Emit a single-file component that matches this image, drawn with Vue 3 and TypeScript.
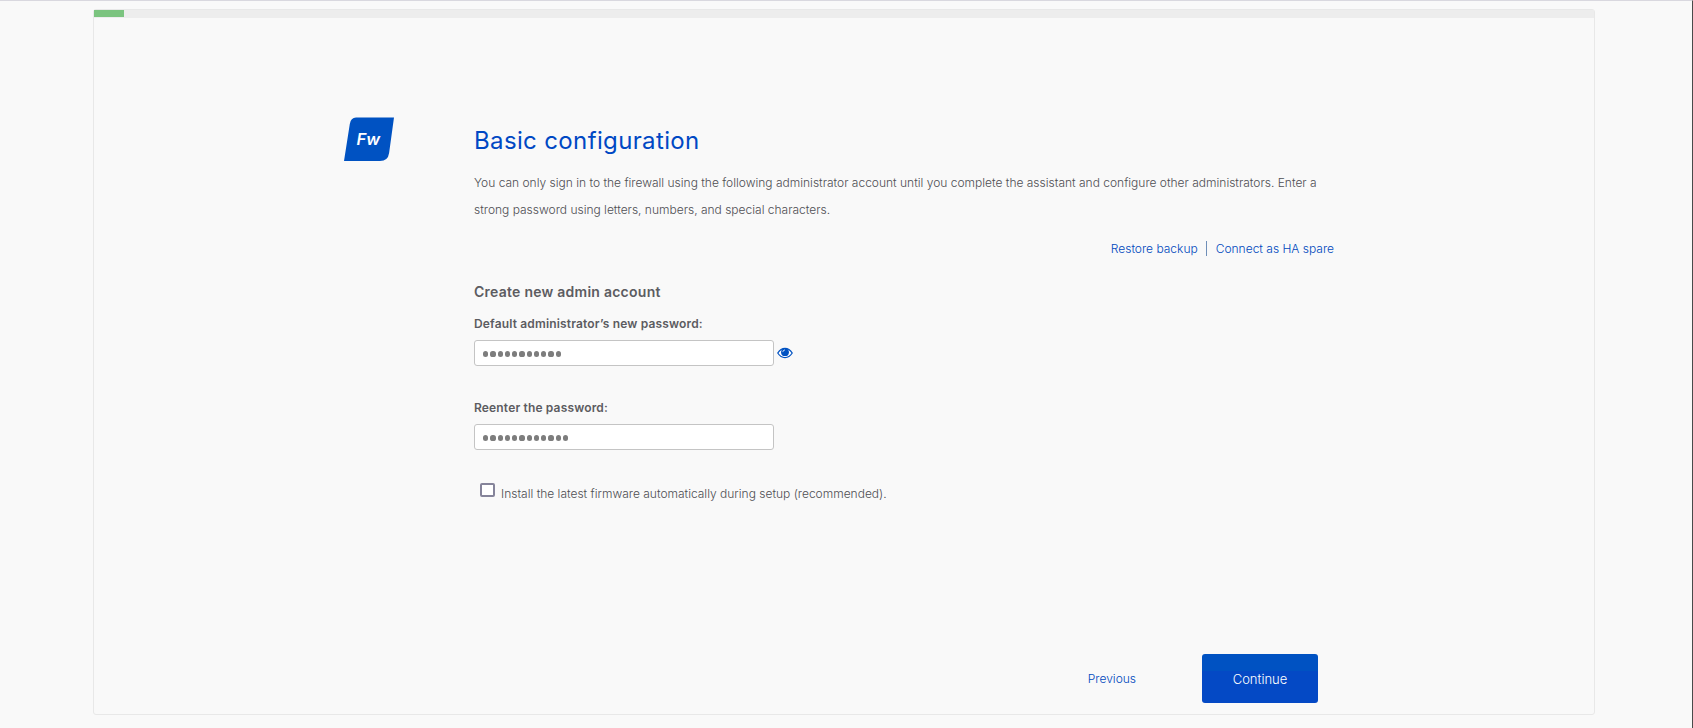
<template>
  <div class="page">
    <main class="wizard">
      <div class="progress">
        <div class="progress-value" :style="{ width: progress + '%' }"></div>
      </div>
      <div class="content">
        <svg class="logo" viewBox="0 0 50 44" width="50" height="44">
          <path d="M12 .5H50L45.1 36Q44 44 36 44H0L5.8 7Q6.8 .5 12 .5Z" fill="#0052c2" />
          <text x="12.5" y="28" class="logo-text">Fw</text>
        </svg>
        <div class="body">
          <h1>Basic configuration</h1>
          <p class="intro">
            You can only sign in to the firewall using the following administrator account until you
            complete the assistant and configure other administrators. Enter a<br />
            strong password using letters, numbers, and special characters.
          </p>
          <nav class="links">
            <a href="#" @click.prevent>Restore backup</a>
            <i class="divider"></i>
            <a href="#" @click.prevent>Connect as HA spare</a>
          </nav>
          <h2>Create new admin account</h2>
          <div v-for="field in fields" :key="field.label" class="field">
            <label>{{ field.label }}</label>
            <div class="input-row">
              <div class="input">
                <i v-for="n in field.length" :key="n" class="dot"></i>
              </div>
              <svg v-if="field.reveal" class="eye" viewBox="0 0 16 12" width="16" height="12">
                <path
                  d="M.8 6Q3.7 1.3 8 1.3T15.2 6Q12.3 10.6 8 10.6T.8 6Z"
                  fill="#fff"
                  stroke="#0052c2"
                  stroke-width="1.3"
                />
                <circle cx="8" cy="5.2" r="3.9" fill="#0052c2" />
                <path d="M5.8 5.1Q5.9 3 8 2.9" fill="none" stroke="#fff" stroke-width=".8" />
              </svg>
            </div>
          </div>
          <div class="check-row" @click="install = !install">
            <div class="checkbox" :class="{ checked: install }"></div>
            <span>Install the latest firmware automatically during setup (recommended).</span>
          </div>
        </div>
      </div>
      <footer class="actions">
        <a href="#" @click.prevent>Previous</a>
        <button type="button">Continue</button>
      </footer>
    </main>
  </div>
</template>

<script setup lang="ts">
import { ref } from 'vue';

interface Field {
  label: string;
  length: number;
  reveal: boolean;
}

const progress = ref(2);
const install = ref(false);

// length is the number of masked characters
const fields: Field[] = [
  { label: 'Default administrator’s new password:', length: 11, reveal: true },
  { label: 'Reenter the password:', length: 12, reveal: false },
];
</script>

<style>
body {
  background: #f9f9f9;
}
</style>

<style scoped>
.page {
  box-sizing: border-box;
  height: 728px;
  padding: 8px 98px 0 93px;
  border-top: 1px solid #d9d8df;
  border-right: 1px solid #4a4a4a;
  overflow: hidden;
  background: #f9f9f9;
  color: #4e4e53;
  font-family: Inter, "Liberation Sans", sans-serif;
  font-size: 12px;
  font-weight: 300;
}

.wizard {
  box-sizing: border-box;
  display: flex;
  flex-direction: column;
  width: 1502px;
  height: 706px;
  border: 1px solid #e8e8e8;
  border-radius: 3px;
}

.progress {
  flex: none;
  height: 8px;
  background: #ededed;
}

.progress-value {
  height: 7px;
  background: #7bc47f;
}

.content {
  display: flex;
  flex: 1;
  padding: 99px 259px 0 250px;
}

.logo {
  flex: none;
  margin-right: 80px;
}

.logo-text {
  fill: #fff;
  font-size: 16.5px;
  font-style: italic;
  font-weight: 600;
}

.body {
  width: 860px;
}

h1 {
  margin: 9px 0 0;
  color: #0048c4;
  font-size: 24px;
  font-weight: 430;
  letter-spacing: 0.36px;
  line-height: 30px;
}

.intro {
  margin: 13px 0 0;
  line-height: 27px;
}

.links {
  display: flex;
  justify-content: flex-end;
  align-items: center;
  height: 16px;
  margin-top: 17px;
}

a {
  color: #0048bd;
  text-decoration: none;
}

.divider {
  width: 1px;
  height: 15px;
  margin: 0 9px 0 8px;
  background: #6f8fb8;
}

h2 {
  margin: 26px 0 0;
  color: #5c5c61;
  font-size: 14px;
  font-weight: 600;
  letter-spacing: 0.25px;
  line-height: 20px;
}

label {
  display: block;
  color: #5c5c61;
  font-weight: 600;
  letter-spacing: 0.16px;
  line-height: 16px;
}

.field {
  box-sizing: border-box;
  height: 84px;
  padding-top: 14px;
}

.input-row {
  display: flex;
  align-items: center;
  margin-top: 8px;
}

.input {
  box-sizing: border-box;
  display: flex;
  align-items: center;
  gap: 2px;
  width: 300px;
  height: 26px;
  padding: 2px 0 0 8px;
  border: 1px solid #c4c4c4;
  border-radius: 3px;
  background: #fff;
}

.dot {
  width: 5.25px;
  height: 5.25px;
  border-radius: 50%;
  background: #7d7d7d;
}

.eye {
  margin-left: 2.5px;
}

.check-row {
  display: flex;
  margin: 13px 0 0 6px;
}

.checkbox {
  box-sizing: border-box;
  width: 15px;
  height: 14px;
  margin-right: 6px;
  border: 2px solid #85849a;
  border-radius: 2px;
  background: #fff;
}

.checkbox.checked {
  background: #0052c2;
}

.check-row span {
  margin-top: 3px;
  line-height: 16px;
}

.actions {
  display: flex;
  justify-content: flex-end;
  align-items: center;
  padding: 0 276px 11px 0;
}

button {
  width: 116px;
  height: 49px;
  margin-left: 66px;
  border: 0;
  border-radius: 3px;
  background: linear-gradient(#0052c2 35%, #0449c5 35%);
  color: #fff;
  font-family: inherit;
  font-size: 13px;
  font-weight: 300;
}
</style>
